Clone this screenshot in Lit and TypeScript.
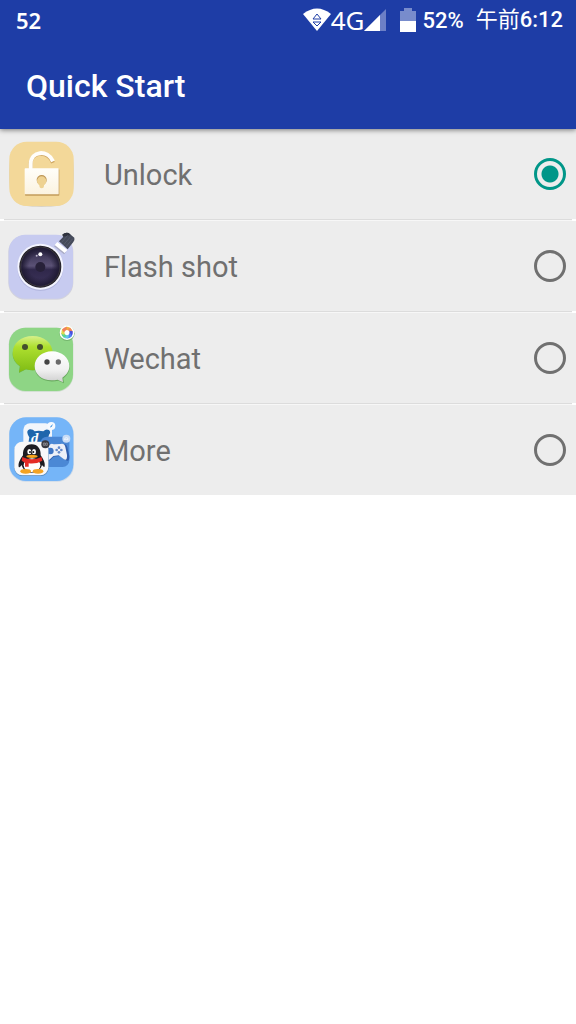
import { LitElement, html, css, svg } from "lit";
import { customElement, state } from "lit/decorators.js";

const unlockIcon = html`
  <svg class="icon" viewBox="0 -3 252 270" aria-hidden="true">
    <defs>
      <linearGradient id="body" x1="0" y1="0" x2="0" y2="1">
        <stop offset="0" stop-color="#fffefa" /><stop offset="1" stop-color="#fbf3e0" />
      </linearGradient>
    </defs>
    <path d="M125 36C206 36 222 50 222 133S206 231 125 231 27 216 27 133 44 36 125 36Z" fill="#d9d2c2" />
    <rect x="28" y="35" width="193" height="193" rx="52" fill="#f3d899" />
    <path d="M92 118V103C92 64 143 60 159 98" fill="none" stroke="#cfa762" stroke-width="12" />
    <path d="M92 118V102C92 62 143 58 159 94" fill="none" stroke="#fffefb" stroke-width="12" />
    <rect x="75" y="118" width="103" height="79" rx="2" fill="#c39c5b" />
    <rect x="74" y="115" width="102" height="78" rx="2" fill="url(#body)" />
    <circle cx="125" cy="150" r="15" fill="#bd9656" />
    <circle cx="125" cy="153" r="14" fill="#eed292" />
    <path d="M118 160h14v8a7 7 0 0 1-14 0Z" fill="#eed292" />
  </svg>`;

const cameraIcon = html`
  <svg class="icon" viewBox="0 -3 252 270" aria-hidden="true">
    <defs>
      <linearGradient id="lens" x1="0" y1="0" x2="0" y2="1">
        <stop offset="0" stop-color="#2b2544" /><stop offset=".48" stop-color="#5b5276" />
        <stop offset=".58" stop-color="#30284b" /><stop offset="1" stop-color="#3b3259" />
      </linearGradient>
      <radialGradient id="edge">
        <stop offset=".6" stop-color="#1f1a33" stop-opacity="0" /><stop offset="1" stop-color="#1f1a33" />
      </radialGradient>
    </defs>
    <rect x="25" y="40" width="195" height="193" rx="50" fill="#d3d3dc" />
    <rect x="26" y="38" width="193" height="192" rx="50" fill="#c7cbf0" />
    <circle cx="121" cy="138" r="69" fill="#b3b7df" />
    <circle cx="121" cy="134" r="69" fill="#f3f4ff" />
    <circle cx="121" cy="134" r="63" fill="#1e1b22" />
    <circle cx="121" cy="134" r="59" fill="none" stroke="#77747c" stroke-width="1" />
    <circle cx="121" cy="134" r="57" fill="url(#lens)" />
    <circle cx="121" cy="134" r="57" fill="url(#edge)" />
    <circle cx="121" cy="135" r="15" fill="#272139" />
    <circle cx="121" cy="97" r="6" fill="#fff" />
    <circle cx="110" cy="101" r="3" fill="#bbb5cc" />
    <path d="M170 67l28 23-6 7-30-24Z" fill="#a9abc4" />
    <path d="M172 60l30 24-8 9-30-24Z" fill="#fff" />
    <path d="M177 58L190 44 187 38Q195 30 206 33L223 47Q225 54 220 60L203 82Z" fill="#454a5a" />
    <path d="M187 38Q195 30 206 33L212 39 196 43 190 44Z" fill="#30333f" />
    <path d="M184 62L203 40M191 68L211 45M198 74L218 50" stroke="#5c6274" stroke-width="2" />
  </svg>`;

const pinwheel = ["#f2b23b", "#f08a5a", "#4b4fe0", "#4e83f2", "#62c8ea", "#5bd68f", "#e2d84c", "#f0805d"];

const wechatIcon = html`
  <svg class="icon" viewBox="0 -3 252 270" aria-hidden="true">
    <defs>
      <linearGradient id="green" x1="0" y1="0" x2="0" y2="1">
        <stop offset="0" stop-color="#d7f08a" /><stop offset=".3" stop-color="#aee02f" />
        <stop offset="1" stop-color="#7fbb14" />
      </linearGradient>
      <linearGradient id="white" x1="0" y1="0" x2="0" y2="1">
        <stop offset="0" stop-color="#fff" /><stop offset=".6" stop-color="#f0f0f0" />
        <stop offset="1" stop-color="#cfcfcf" />
      </linearGradient>
    </defs>
    <rect x="26" y="41" width="194" height="192" rx="50" fill="#c9dcc9" />
    <rect x="27" y="41" width="192" height="190" rx="50" fill="#8ed585" />
    <path d="M98 72C64 72 38 93 38 121c0 14 8 27 21 36l-2 20 21-11c7 2 13 3 20 3 34 0 60-21 60-48S132 72 98 72Z" fill="#68b64d" />
    <path d="M98 66C64 66 38 87 38 117c0 17 9 30 23 40l-4 18 21-9c7 2 13 3 20 3 34 0 60-22 60-52S132 66 98 66Z" fill="url(#green)" />
    <circle cx="75" cy="99" r="9" fill="#45502d" /><circle cx="120" cy="99" r="9" fill="#45502d" />
    <path d="M156 115c29 0 53 20 53 45 0 13-8 25-19 33l2 15-17-8c-41 10-71-12-71-40 0-25 23-45 52-45Z" fill="#69aa5f" />
    <path d="M156 112c29 0 52 20 52 44 0 14-8 27-21 35l2 14-16-8c-40 9-69-12-69-41 0-24 23-44 52-44Z" fill="url(#white)" />
    <circle cx="141" cy="144" r="8" fill="#454545" /><circle cx="175" cy="144" r="8" fill="#6b6b6b" />
    <circle cx="201" cy="58" r="23" fill="#75b66e" />
    <circle cx="201" cy="56" r="22" fill="#fff" />
    ${pinwheel.map((c, i) => svg`<path d="M197 39Q205 37 213 43L206 49 195 48Z" fill=${c} transform="rotate(${i * 45} 201 56)" />`)}
  </svg>`;

const moreIcon = html`
  <svg class="icon" viewBox="0 3 252 270" aria-hidden="true">
    <rect x="27" y="41" width="195" height="192" rx="50" fill="#cddae8" />
    <rect x="28" y="40" width="192" height="191" rx="50" fill="#75b5f8" />
    <rect x="70" y="58" width="86" height="80" rx="20" fill="#f2f6fb" />
    <path d="M83 90q-4-11 6-14 10-1 15 6 12-3 26 0 8-9 17-4 7 7 0 14-1 5-2 8 6 14 2 30H88q-5-15 0-30-3-4-5-10Z" fill="#1f66ac" />
    <text x="93" y="116" class="badge-letter">d</text>
    <rect x="121" y="98" width="87" height="91" rx="20" fill="#4b88d5" />
    <path d="M150 130q4-14 16-8l20-1q12-4 16 9l6 26q1 19-10 13l-17-13-20 2-10 10q-13 5-8-13Z" fill="#315fae" />
    <path d="M146 128q4-13 16-7l19-1q12-4 15 9l5 24q1 19-9 13l-16-12-16 2-12 11q-12 5-9-12Z" fill="#edf0f8" />
    <g fill="#6388c9"><circle cx="177" cy="131" r="4" /><circle cx="177" cy="145" r="4" /><circle cx="170" cy="138" r="4" /><circle cx="184" cy="138" r="4" /></g>
    <circle cx="151" cy="141" r="10" fill="#3d74c4" />
    <circle cx="154" cy="66" r="12" fill="#f6faff" />
    <path d="M149 72l3-6 7-6-3 7Z" fill="#4b9be7" />
    <circle cx="199" cy="104" r="12" fill="#c8dcf6" />
    <path d="M193 107h11q1-6-5-6-6 1-6 6Z" stroke="#fff" stroke-width="2" fill="none" />
    <rect x="43" y="116" width="103" height="100" rx="24" fill="#5587b9" />
    <rect x="43" y="113" width="102" height="101" rx="24" fill="#f8f8f9" />
    <path d="M95 121c-18 0-27 14-26 33-7 10-15 22-13 34 2 4 6-1 9-5 3 13 14 23 30 23s28-10 31-23c3 4 7 9 8 4 2-12-5-23-12-33 1-19-9-33-27-33Z" fill="#1c1c22" />
    <ellipse cx="96" cy="184" rx="25" ry="21" fill="#fff" />
    <ellipse cx="77" cy="202" rx="16" ry="7" fill="#f4a323" /><ellipse cx="114" cy="202" rx="16" ry="7" fill="#f4a323" />
    <ellipse cx="88" cy="143" rx="6" ry="8" fill="#fff" /><ellipse cx="102" cy="143" rx="6" ry="8" fill="#fff" />
    <circle cx="90" cy="144" r="3" fill="#111" /><circle cx="100" cy="144" r="3" fill="#111" />
    <ellipse cx="96" cy="157" rx="17" ry="5" fill="#f7a51d" />
    <path d="M67 159q28 14 58 0l2 11q-18 11-41 8v10H75v-12l-10-6Z" fill="#e42c27" />
    <circle cx="136" cy="121" r="12" fill="#393a40" />
    <path d="M130 117h5v7h-5zM137 117h5v7h-5z" stroke="#a4a4a9" stroke-width="2" fill="none" />
  </svg>`;

const items = [
  { id: "unlock", label: "Unlock", icon: unlockIcon },
  { id: "flash", label: "Flash shot", icon: cameraIcon },
  { id: "wechat", label: "Wechat", icon: wechatIcon },
  { id: "more", label: "More", icon: moreIcon },
];

@customElement("app-root")
export class AppRoot extends LitElement {
  @state() private selected = "unlock";

  static styles = css`
    :host {
      display: block;
      min-height: 100vh;
      background: #fff;
      font-family: Roboto, "Noto Sans CJK JP", sans-serif;
    }
    .header {
      position: relative;
      background: #1e3da6;
      color: #fff;
      box-shadow: 0 1px 5px rgba(0, 0, 0, 0.5);
    }
    .status {
      display: flex;
      align-items: center;
      height: 40px;
      padding: 0 13px 0 16px;
      font-size: 22px;
      font-weight: 500;
      white-space: nowrap;
    }
    .count {
      flex: 1;
      font: 600 22px "Noto Sans", sans-serif;
    }
    .network { font: 400 26px "Noto Sans", sans-serif; }
    .wifi, .signal, .battery { display: block; }
    .battery { margin: 0 6px 0 13px; }
    .clock {
      display: flex;
      align-items: center;
      margin-left: 12px;
      line-height: 26px;
    }
    .meridiem { font-weight: 400; }
    .title {
      display: flex;
      align-items: center;
      height: 89px;
      box-sizing: border-box;
      margin: 0;
      padding: 2px 26px 0;
      font-size: 32px;
      font-weight: 500;
    }
    .list { margin: 0; padding: 0; border: 0; }
    .row {
      display: flex;
      align-items: center;
      height: 90px;
      padding-right: 10px;
      background: #ededed;
      color: #707070;
      font-size: 29px;
    }
    .divider {
      height: 2px;
      padding: 0 4px;
      background: linear-gradient(#dcdcdc 50%, #f7f7f7 50%) content-box, #fff;
    }
    .icon { width: 84px; height: 90px; flex: none; }
    .badge-letter { font: italic 700 44px "Liberation Serif", serif; fill: #fff; }
    .name { flex: 1; margin-left: 20px; padding-top: 2px; }
    .radio {
      appearance: none;
      flex: none;
      box-sizing: border-box;
      width: 32px;
      height: 32px;
      margin: 0;
      border: 3px solid #707070;
      border-radius: 50%;
    }
    .radio:checked {
      border-color: #009688;
      background: radial-gradient(circle, #009688 8px, transparent 9px);
    }
  `;

  render() {
    return html`
      <header class="header">
        <div class="status">
          <span class="count">52</span>
          <svg class="wifi" width="28" height="24" viewBox="0 0 28 24" aria-hidden="true">
            <path d="M0 6Q14-5 28 6L14 23Z" fill="#fff" />
            <path d="M10 11h8L14 6ZM10 14h8L14 18Z" fill="#fff" stroke="#1e3da6" stroke-width="1" />
          </svg>
          <span class="network">4G</span>
          <svg class="signal" width="23" height="24" viewBox="0 0 23 24" aria-hidden="true">
            <path d="M0 23L22 1v22Z" fill="#6d80c6" />
            <path d="M0 23L16 7v16Z" fill="#fff" />
          </svg>
          <svg class="battery" width="16" height="24" viewBox="0 0 16 24" aria-hidden="true">
            <path d="M0 3h4V0h8v3h4v10H0Z" fill="#788ccc" />
            <path d="M0 13h16v11H0Z" fill="#fff" />
          </svg>
          <span>52%</span>
          <span class="clock"><span class="meridiem">午前</span><span>6:12</span></span>
        </div>
        <h1 class="title">Quick Start</h1>
      </header>
      <fieldset class="list" aria-label="Quick Start">
        ${items.map((item, i) => html`
          ${i ? html`<div class="divider"></div>` : ""}
          <label class="row" for=${item.id}>
            ${item.icon}
            <span class="name">${item.label}</span>
            <input class="radio" type="radio" name="quick" id=${item.id}
              .checked=${this.selected === item.id}
              @change=${() => (this.selected = item.id)} />
          </label>`)}
      </fieldset>
    `;
  }
}
